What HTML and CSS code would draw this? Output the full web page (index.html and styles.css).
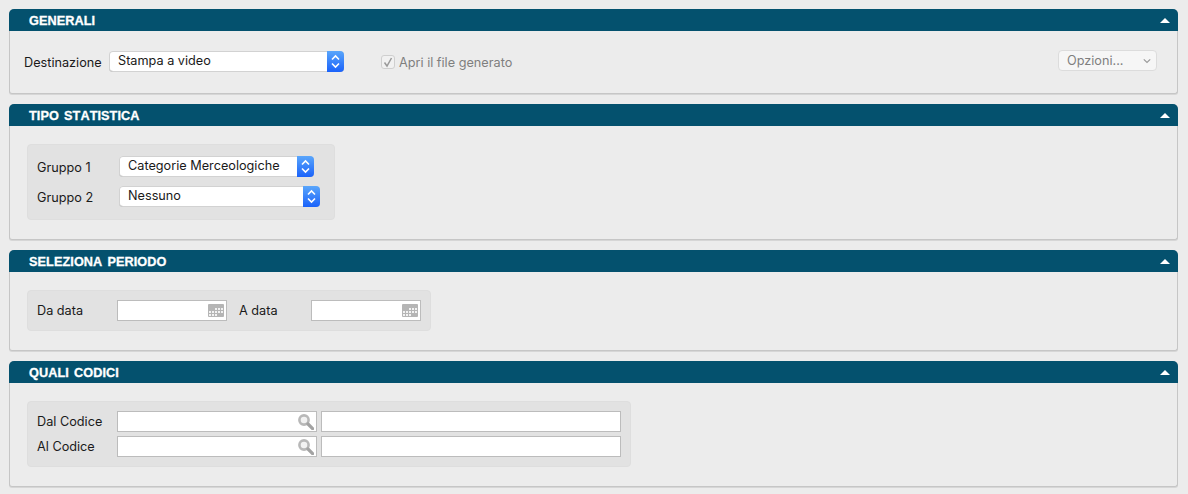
FILE: index.html
```html
<!DOCTYPE html>
<html lang="it">
<head>
<meta charset="utf-8">
<title>Statistica</title>
<link rel="stylesheet" href="styles.css">
</head>
<body>
<svg class="defs" width="0" height="0" aria-hidden="true">
  <defs>
    <symbol id="updown" viewBox="0 0 17 21">
      <path d="M5 8.500 8.500 5 12 8.500M5 12.500 8.500 16 12 12.500" fill="none" stroke="#fff" stroke-width="1.600"/>
    </symbol>
    <symbol id="cal" viewBox="0 0 16 13">
      <path fill="#b5b5b5" d="M1 0h14a1 1 0 0 1 1 1v11a1 1 0 0 1-1 1H1a1 1 0 0 1-1-1V1a1 1 0 0 1 1-1Z"/>
      <path fill="#f2f2f2" d="M7 4h2v2H7zM10 4h2v2h-2zM13 4h2v2h-2zM1 7h2v2H1zM4 7h2v2H4zM7 7h2v2H7zM10 7h2v2h-2zM13 7h2v2h-2zM1 10h2v2H1zM4 10h2v2H4zM7 10h2v2H7z"/>
    </symbol>
    <symbol id="lens" viewBox="0 0 16 16">
      <circle cx="6" cy="6" r="4.600" fill="#f2f2f2" stroke="#b8b8b8" stroke-width="2.600"/>
      <path d="M10 10l4.600 4.600" stroke="#a3a3a3" stroke-width="3.200" stroke-linecap="round"/>
    </symbol>
  </defs>
</svg>

<section class="panel panel-generali">
  <header class="bar"><h2>GENERALI</h2><span class="collapse"></span></header>
  <div class="body body-generali">
    <span class="label label-dest">Destinazione</span>
    <div class="select w-235"><span>Stampa a video</span><i class="stepper"><svg width="17" height="21"><use href="#updown"/></svg></i></div>
    <label class="check"><span class="box"><svg width="12" height="12" viewBox="0 0 12 12"><path d="M2.500 6.500 5 10 9.500 2" fill="none" stroke="#9a9a9a" stroke-width="1.500"/></svg></span>Apri il file generato</label>
    <div class="button"><span>Opzioni...</span><svg width="8" height="6" viewBox="0 0 8 6"><path d="M.8 1.300 4 4.500l3.200-3.200" fill="none" stroke="#9a9a9a" stroke-width="1.200"/></svg></div>
  </div>
</section>

<section class="panel panel-tipo">
  <header class="bar"><h2>TIPO STATISTICA</h2><span class="collapse"></span></header>
  <div class="body">
    <div class="group group-tipo">
      <div class="row row-g1"><span class="label label-col">Gruppo 1</span><div class="select w-195"><span>Categorie Merceologiche</span><i class="stepper"><svg width="17" height="21"><use href="#updown"/></svg></i></div></div>
      <div class="row"><span class="label label-col">Gruppo 2</span><div class="select w-201"><span>Nessuno</span><i class="stepper"><svg width="17" height="21"><use href="#updown"/></svg></i></div></div>
    </div>
  </div>
</section>

<section class="panel panel-periodo">
  <header class="bar"><h2>SELEZIONA PERIODO</h2><span class="collapse"></span></header>
  <div class="body">
    <div class="group group-periodo">
      <span class="label label-date">Da data</span>
      <div class="field w-110"><svg class="ico" width="16" height="13"><use href="#cal"/></svg></div>
      <span class="label label-adata">A data</span>
      <div class="field w-110"><svg class="ico" width="16" height="13"><use href="#cal"/></svg></div>
    </div>
  </div>
</section>

<section class="panel panel-codici">
  <header class="bar"><h2>QUALI CODICI</h2><span class="collapse"></span></header>
  <div class="body">
    <div class="group group-codici">
      <div class="row row-c1"><span class="label label-date">Dal Codice</span><div class="field w-200"><svg class="ico" width="16" height="16"><use href="#lens"/></svg></div><div class="field w-300"></div></div>
      <div class="row"><span class="label label-date">Al Codice</span><div class="field w-200"><svg class="ico" width="16" height="16"><use href="#lens"/></svg></div><div class="field w-300"></div></div>
    </div>
  </div>
</section>
</body>
</html>
```
FILE: styles.css
```css
* { box-sizing: border-box; }
html, body { margin: 0; height: 100%; }
body {
  background: #ececec;
  padding: 9px 10px 0 9px;
  font-family: Inter, "Liberation Sans", sans-serif;
  font-size: 12.700px;
  color: #1a1a1a;
  overflow: hidden;
}
.defs { position: absolute; }
.panel {
  background: #ececec;
  border: 1px solid #c6c6c6;
  border-top: 0;
  border-radius: 5px 5px 3px 3px;
  margin-bottom: 10px;
  box-shadow: 0 1px 0 #d6d6d6;
}
.panel-generali { height: 85px; }
.panel-tipo { height: 136px; }
.panel-periodo { height: 101px; }
.panel-codici { height: 126px; }
.bar {
  height: 22px;
  margin: 0 -1px;
  background: #04516e;
  border-radius: 5px 5px 0 0;
  display: flex;
  align-items: center;
  justify-content: space-between;
  padding: 0 8px 0 20px;
}
.bar h2 {
  margin: 0;
  padding-top: 2px;
  color: #fff;
  font-family: "Liberation Sans", Arial, sans-serif;
  font-size: 12.700px;
  font-weight: 700;
  line-height: 14px;
  font-kerning: none;
  letter-spacing: .08px;
  word-spacing: 1.500px;
  -webkit-text-stroke: .3px #fff;
}
.collapse {
  width: 0;
  height: 0;
  border-left: 5px solid transparent;
  border-right: 5px solid transparent;
  border-bottom: 5px solid #fff;
}
.body { padding: 18px 17px 0; }
.body-generali {
  padding: 20px 20px 0 14px;
  display: flex;
  align-items: flex-start;
}
.label { line-height: 21px; white-space: nowrap; }
.label-dest { width: 85px; padding-top: 1px; }
.label-col { width: 82px; flex: none; padding-top: 1px; }
.label-date { width: 80px; flex: none; }
.label-adata { width: 72px; flex: none; margin-left: 12px; }
.select {
  height: 21px;
  background: #fff;
  border-radius: 4px;
  box-shadow: inset 0 0 0 1px #d2d2d2, inset 0 -1px 0 #a8a8a8;
  display: flex;
  justify-content: space-between;
  line-height: 19px;
  padding-left: 9px;
  flex: none;
}
.stepper {
  width: 17px;
  height: 21px;
  background: linear-gradient(#5aa6fb, #1a62fa);
  border-radius: 0 4px 4px 0;
  display: block;
}
.stepper svg { display: block; }
.w-235 { width: 235px; }
.w-195 { width: 195px; }
.w-201 { width: 201px; }
.w-110 { width: 110px; }
.w-200 { width: 200px; }
.w-300 { width: 300px; margin-left: 4px; }
.check {
  margin-left: 37px;
  color: #7f7f7f;
  display: flex;
  align-items: center;
  height: 21px;
  padding-top: 1px;
}
.box {
  width: 14px;
  height: 14px;
  margin-right: 4px;
  border: 1px solid #cfcfcf;
  border-radius: 3px;
  background: #f1f1f1;
  display: flex;
  align-items: center;
  justify-content: center;
}
.button {
  margin-left: auto;
  width: 99px;
  height: 21px;
  margin-top: -1px;
  padding: 0 5px 0 8px;
  background: #f6f6f6;
  border: 1px solid #dcdcdc;
  border-radius: 4px;
  color: #7f7f7f;
  display: flex;
  align-items: center;
  justify-content: space-between;
}
.group {
  background: #e2e2e2;
  border: 1px solid #dedede;
  border-radius: 4px;
}
.group-tipo { width: 308px; height: 76px; padding: 11px 0 0 9px; }
.group-periodo { width: 404px; height: 41px; padding: 9px 0 0 9px; display: flex; }
.group-codici { width: 604px; height: 66px; padding: 9px 0 0 9px; }
.row { display: flex; }
.row-g1 { margin-bottom: 8px; }
.row-c1 { margin-bottom: 4px; }
.field {
  height: 21px;
  background: #fff;
  border: 1px solid #bcbcbc;
  flex: none;
  display: flex;
  align-items: center;
  justify-content: flex-end;
  padding-right: 2px;
}
```
